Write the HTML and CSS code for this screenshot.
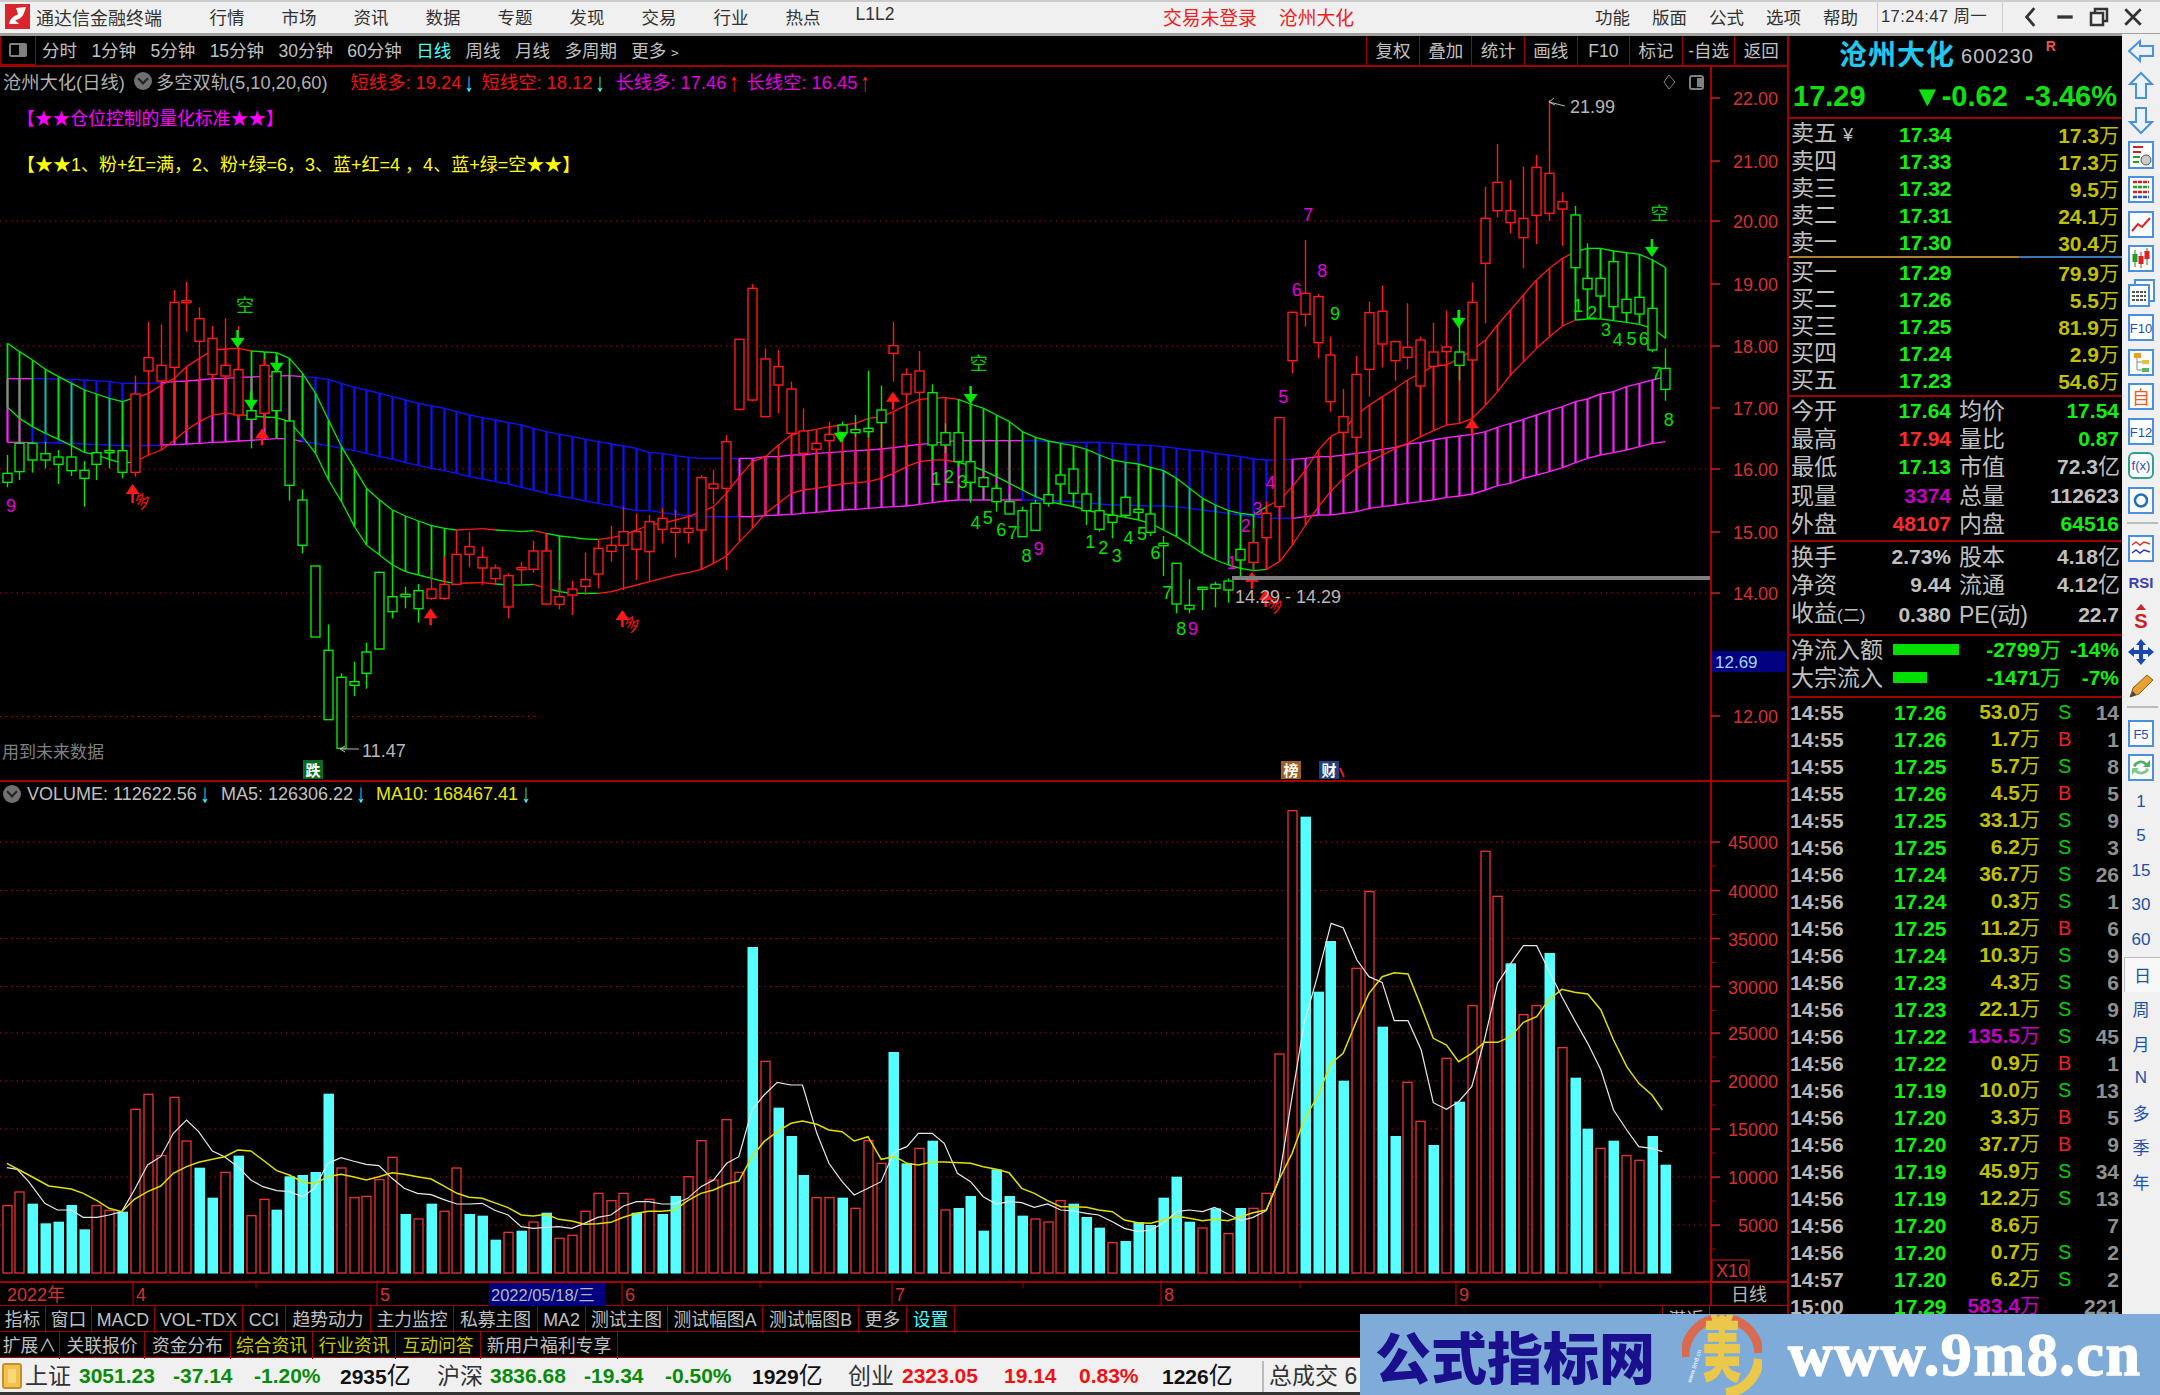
FILE: index.html
```html
<!DOCTYPE html>
<html>
	<head>
		<meta charset="utf-8">
		<title>通达信金融终端</title>
		<link rel="stylesheet" href="styles.css">
	</head>
	<body>
		<div class="menubar">
			<svg class="logo" viewBox="0 0 25 25"><rect width="25" height="25" fill="#d8262c"/><path d="M4 20 C6 12 11 12 13 10 L11 4 L21 3 C19 9 18 15 10 16 L14 20 Z" fill="#fff"/></svg>
			<span class="app-title">通达信金融终端</span>
			<div class="menu-main">
				<span>行情</span><span>市场</span><span>资讯</span><span>数据</span><span>专题</span><span>发现</span><span>交易</span><span>行业</span><span>热点</span><span>L1L2</span>
			</div>
			<div class="menu-notice"><span>交易未登录</span><span>沧州大化</span></div>
			<div class="menu-right"><span>功能</span><span>版面</span><span>公式</span><span>选项</span><span>帮助</span></div>
			<div class="clock">17:24:47 周一</div>
			<div class="win-btns">
				<svg viewBox="0 0 16 20"><path d="M11 2 L4 10 L11 18" fill="none" stroke="#333" stroke-width="2.5"/></svg>
				<svg viewBox="0 0 16 20"><path d="M1 10 H15" stroke="#333" stroke-width="3"/></svg>
				<svg viewBox="0 0 20 20"><path d="M2 6 H14 V18 H2 Z M6 6 V2 H18 V14 H14" fill="none" stroke="#333" stroke-width="2.5"/></svg>
				<svg viewBox="0 0 18 20"><path d="M2 3 L16 17 M16 3 L2 17" stroke="#333" stroke-width="2.5"/></svg>
			</div>
		</div>

		<div class="work">
			<div class="left">
				<div class="toolbar">
					<div class="tb-toggle"><i></i></div>
					<div class="periods">
						<span>分时</span><span>1分钟</span><span>5分钟</span><span>15分钟</span><span>30分钟</span><span>60分钟</span><span class="on">日线</span><span>周线</span><span>月线</span><span>多周期</span><span>更多﹥</span>
					</div>
					<div class="tb-right">
						<span>复权</span><span>叠加</span><span>统计</span><span>画线</span><span>F10</span><span>标记</span><span>-自选</span><span>返回</span>
					</div>
				</div>
				<div class="chart-box">
					<svg id="chart" viewBox="0 67 1788 1239" width="1788" height="1239"></svg>
					<div class="info-line">
						<span class="i-name">沧州大化(日线)</span>
						<span class="dot"></span>
						<span class="i-name">多空双轨(5,10,20,60)</span>
						<span class="red i-gap">短线多: 19.24<em class="cy">↓</em></span>
						<span class="red i-two">短线空: 18.12<em class="cy">↓</em></span>
						<span class="mag">长线多: 17.46<em class="rd">↑</em></span>
						<span class="mag">长线空: 16.45<em class="rd">↑</em></span>
					</div>
					<div class="note note-a">【★★仓位控制的量化标准★★】</div>
					<div class="note note-b">【★★1、粉+红=满，2、粉+绿=6，3、蓝+红=4 ，4、蓝+绿=空★★】</div>
					<div class="vol-line">
						<span class="dot"></span>
						<span class="v-a">VOLUME: 112622.56<em class="cy">↓</em></span>
						<span class="v-c">MA5: 126306.22<em class="cy">↓</em></span>
						<span class="v-b">MA10: 168467.41<em class="cy">↓</em></span>
					</div>
				</div>
				<div class="tabs tabs-a">
					<span>指标</span><span>窗口</span><span>MACD</span><span>VOL-TDX</span><span>CCI</span><span>趋势动力</span><span>主力监控</span><span>私募主图</span><span>MA2</span><span>测试主图</span><span>测试幅图A</span><span>测试幅图B</span><span>更多</span><span class="cyan">设置</span><span class="t-fill"></span><span>潜近</span>
				</div>
				<div class="tabs tabs-b">
					<span>扩展∧</span><span>关联报价</span><span>资金分布</span><span class="olive">综合资讯</span><span class="olive">行业资讯</span><span class="olive">互动问答</span><span>新用户福利专享</span>
				</div>
			</div>

			<div class="quote">
				<div class="q-name"><b>沧州大化</b><span>600230</span><sup>R</sup></div>
				<div class="q-price"><b>17.29</b><b>▼-0.62</b><b>-3.46%</b></div>

				<div class="book book-sell">
					<div><span>卖五<small>¥</small></span><b>17.34</b><em>17.3<u>万</u></em></div>
					<div><span>卖四</span><b>17.33</b><em>17.3<u>万</u></em></div>
					<div><span>卖三</span><b>17.32</b><em>9.5<u>万</u></em></div>
					<div><span>卖二</span><b>17.31</b><em>24.1<u>万</u></em></div>
					<div><span>卖一</span><b>17.30</b><em>30.4<u>万</u></em></div>
				</div>
				<div class="book-split"><i></i></div>
				<div class="book">
					<div><span>买一</span><b>17.29</b><em>79.9<u>万</u></em></div>
					<div><span>买二</span><b>17.26</b><em>5.5<u>万</u></em></div>
					<div><span>买三</span><b>17.25</b><em>81.9<u>万</u></em></div>
					<div><span>买四</span><b>17.24</b><em>2.9<u>万</u></em></div>
					<div><span>买五</span><b>17.23</b><em>54.6<u>万</u></em></div>
				</div>

				<div class="stats stats-a">
					<div><span>今开</span><b class="g">17.64</b><span>均价</span><b class="g">17.54</b></div>
					<div><span>最高</span><b class="r">17.94</b><span>量比</span><b class="g">0.87</b></div>
					<div><span>最低</span><b class="g">17.13</b><span>市值</span><b>72.3<u>亿</u></b></div>
					<div><span>现量</span><b class="p">3374</b><span>总量</span><b>112623</b></div>
					<div><span>外盘</span><b class="r">48107</b><span>内盘</span><b class="g">64516</b></div>
				</div>
				<div class="stats stats-b">
					<div><span>换手</span><b>2.73%</b><span>股本</span><b>4.18<u>亿</u></b></div>
					<div><span>净资</span><b>9.44</b><span>流通</span><b>4.12<u>亿</u></b></div>
					<div><span>收益<small>(二)</small></span><b>0.380</b><span>PE(动)</span><b>22.7</b></div>
				</div>
				<div class="flow">
					<div><span>净流入额</span><i class="bar-a"></i><b>-2799<u>万</u></b><b>-14%</b></div>
					<div><span>大宗流入</span><i class="bar-b"></i><b>-1471<u>万</u></b><b>-7%</b></div>
				</div>
				<div class="ticks">
					<div><span>14:55</span><span>17.26</span><span>53.0<u>万</u></span><span>S</span><span>14</span></div>
					<div><span>14:55</span><span>17.26</span><span>1.7<u>万</u></span><span class="b">B</span><span>1</span></div>
					<div><span>14:55</span><span>17.25</span><span>5.7<u>万</u></span><span>S</span><span>8</span></div>
					<div><span>14:55</span><span>17.26</span><span>4.5<u>万</u></span><span class="b">B</span><span>5</span></div>
					<div><span>14:55</span><span>17.25</span><span>33.1<u>万</u></span><span>S</span><span>9</span></div>
					<div><span>14:56</span><span>17.25</span><span>6.2<u>万</u></span><span>S</span><span>3</span></div>
					<div><span>14:56</span><span>17.24</span><span>36.7<u>万</u></span><span>S</span><span>26</span></div>
					<div><span>14:56</span><span>17.24</span><span>0.3<u>万</u></span><span>S</span><span>1</span></div>
					<div><span>14:56</span><span>17.25</span><span>11.2<u>万</u></span><span class="b">B</span><span>6</span></div>
					<div><span>14:56</span><span>17.24</span><span>10.3<u>万</u></span><span>S</span><span>9</span></div>
					<div><span>14:56</span><span>17.23</span><span>4.3<u>万</u></span><span>S</span><span>6</span></div>
					<div><span>14:56</span><span>17.23</span><span>22.1<u>万</u></span><span>S</span><span>9</span></div>
					<div><span>14:56</span><span>17.22</span><span class="big">135.5<u>万</u></span><span>S</span><span>45</span></div>
					<div><span>14:56</span><span>17.22</span><span>0.9<u>万</u></span><span class="b">B</span><span>1</span></div>
					<div><span>14:56</span><span>17.19</span><span>10.0<u>万</u></span><span>S</span><span>13</span></div>
					<div><span>14:56</span><span>17.20</span><span>3.3<u>万</u></span><span class="b">B</span><span>5</span></div>
					<div><span>14:56</span><span>17.20</span><span>37.7<u>万</u></span><span class="b">B</span><span>9</span></div>
					<div><span>14:56</span><span>17.19</span><span>45.9<u>万</u></span><span>S</span><span>34</span></div>
					<div><span>14:56</span><span>17.19</span><span>12.2<u>万</u></span><span>S</span><span>13</span></div>
					<div><span>14:56</span><span>17.20</span><span>8.6<u>万</u></span><span></span><span>7</span></div>
					<div><span>14:56</span><span>17.20</span><span>0.7<u>万</u></span><span>S</span><span>2</span></div>
					<div><span>14:57</span><span>17.20</span><span>6.2<u>万</u></span><span>S</span><span>2</span></div>
					<div><span>15:00</span><span>17.29</span><span class="big">583.4<u>万</u></span><span></span><span>221</span></div>
				</div>
			</div>

			<div class="sidebar">
				<div class="sb"><svg viewBox="0 0 30 30"><path class="arw" d="M3 15 L14 5 V10 H27 V20 H14 V25 Z"/></svg></div>
				<div class="sb"><svg viewBox="0 0 30 30"><path class="arw" d="M15 2 L26 13 H20 V27 H10 V13 H4 Z"/></svg></div>
				<div class="sb"><svg viewBox="0 0 30 30"><path class="arw" d="M15 28 L26 17 H20 V3 H10 V17 H4 Z"/></svg></div>
				<div class="sb"><svg viewBox="0 0 30 30"><rect class="bx" x="3" y="2" width="24" height="26"/><path d="M7 7 H17 M7 12 H15" stroke="#d02020" stroke-width="2"/><path d="M7 17 H14 M7 22 H13" stroke="#20a020" stroke-width="2"/><circle cx="20" cy="20" r="5" fill="#ccc" stroke="#555"/></svg></div>
				<div class="sb"><svg viewBox="0 0 30 30"><rect class="bx" x="3" y="3" width="24" height="25"/><path d="M7 8 H23 M7 18 H23" stroke="#d02020" stroke-width="2.5" stroke-dasharray="4 1"/><path d="M7 13 H23" stroke="#20a020" stroke-width="2.5" stroke-dasharray="4 1"/><path d="M7 23 H23" stroke="#2050d0" stroke-width="2.5" stroke-dasharray="4 1"/></svg></div>
				<div class="sb"><svg viewBox="0 0 30 30"><rect class="bx" x="3" y="3" width="24" height="25"/><path d="M6 22 L12 15 L16 18 L24 9" fill="none" stroke="#e02020" stroke-width="2"/></svg></div>
				<div class="sb"><svg viewBox="0 0 30 30"><rect class="bx" x="3" y="3" width="24" height="25"/><path d="M9 7 V24 M21 5 V22" stroke="#208020"/><rect x="6.500" y="11" width="5" height="8" fill="#20a020"/><path d="M15 9 V25" stroke="#d02020"/><rect x="12.500" y="13" width="5" height="8" fill="#e02020"/><rect x="18.500" y="8" width="5" height="8" fill="#e02020"/></svg></div>
				<div class="sb"><svg viewBox="0 0 30 30"><rect class="bx" x="9" y="2" width="19" height="21"/><rect class="bx" x="3" y="7" width="20" height="21"/><path d="M6 14 H20 M6 18 H20 M6 22 H20" stroke="#555" stroke-width="2" stroke-dasharray="3 1"/></svg></div>
				<div class="sb"><svg viewBox="0 0 30 30"><rect class="bx" x="3" y="3" width="24" height="25"/><text class="sb-t" x="15" y="21" text-anchor="middle">F10</text></svg></div>
				<div class="sb"><svg viewBox="0 0 30 30"><rect class="bx" x="3" y="3" width="24" height="25"/><path d="M11 9 V23 H17 M11 15 H17" fill="none" stroke="#888"/><rect x="8" y="6" width="7" height="5" fill="#e8a020"/><rect x="16" y="13" width="7" height="4" fill="#e8c040"/><rect x="16" y="21" width="7" height="4" fill="#60b060"/></svg></div>
				<div class="sb"><svg viewBox="0 0 30 30"><rect class="bx" x="3" y="3" width="24" height="25"/><text class="sb-o" x="15" y="23" text-anchor="middle">自</text></svg></div>
				<div class="sb"><svg viewBox="0 0 30 30"><rect class="bx" x="3" y="3" width="24" height="25"/><text class="sb-t" x="15" y="21" text-anchor="middle">F12</text></svg></div>
				<div class="sb"><svg viewBox="0 0 30 30"><rect class="bx bx-t" x="3" y="3" width="24" height="25" rx="5"/><text class="sb-t" x="15" y="20" text-anchor="middle">f(x)</text></svg></div>
				<div class="sb"><svg viewBox="0 0 30 30"><rect class="bx" x="3" y="3" width="24" height="25"/><circle cx="15" cy="15.500" r="6" fill="none" stroke="#2070c0" stroke-width="2.5"/></svg></div>
				<div class="sb-div sb-div-a"></div>
				<div class="sb"><svg viewBox="0 0 30 30"><rect class="bx" x="3" y="3" width="24" height="25"/><path d="M6 12 L10 9 L14 12 L18 9 L24 11" fill="none" stroke="#e03030" stroke-width="1.500"/><path d="M6 20 L10 17 L14 20 L18 17 L24 19" fill="none" stroke="#3030d0" stroke-width="1.500"/></svg></div>
				<div class="sb sb-rsi">RSI</div>
				<div class="sb"><svg viewBox="0 0 30 30"><path d="M15 2 L20 8 H10 Z" fill="#d02020"/><text class="sb-s" x="15" y="26" text-anchor="middle">S</text></svg></div>
				<div class="sb"><svg viewBox="0 0 30 30"><path d="M15 2 L20 8 H17 V13 H22 V10 L28 15 L22 20 V17 H17 V22 H20 L15 28 L10 22 H13 V17 H8 V20 L2 15 L8 10 V13 H13 V8 H10 Z" fill="#1848b0"/></svg></div>
				<div class="sb"><svg viewBox="0 0 30 30"><path d="M4 26 L7 17 L21 4 L27 9 L13 23 Z" fill="#e8a030" stroke="#806020"/><path d="M4 26 L7 20 L10 24 Z" fill="#444"/></svg></div>
				<div class="sb-div sb-div-b"></div>
				<div class="sb"><svg viewBox="0 0 30 30"><rect class="bx" x="3" y="3" width="24" height="25"/><text class="sb-t" x="15" y="21" text-anchor="middle">F5</text></svg></div>
				<div class="sb"><svg viewBox="0 0 30 30"><rect class="bx" x="3" y="3" width="24" height="25"/><path d="M7 14 A8 7 0 0 1 21 11 L24 8 V15 H17 L19 13 A5 4 0 0 0 10 15 Z" fill="#50b060"/><path d="M23 17 A8 7 0 0 1 9 20 L6 23 V16 H13 L11 18 A5 4 0 0 0 20 16 Z" fill="#80c890"/></svg></div>
				<div class="sb">1</div><div class="sb">5</div><div class="sb">15</div><div class="sb">30</div><div class="sb">60</div>
				<div class="sb sb-on">日</div><div class="sb">周</div><div class="sb">月</div><div class="sb">N</div><div class="sb">多</div><div class="sb">季</div><div class="sb">年</div>
			</div>
		</div>

		<div class="status">
			<span class="s-icon"></span>
			<span class="s-l">上证</span><span class="s-g">3051.23</span><span class="s-g">-37.14</span><span class="s-g">-1.20%</span><span class="s-k">2935<u>亿</u></span>
			<span class="s-l">沪深</span><span class="s-g">3836.68</span><span class="s-g">-19.34</span><span class="s-g">-0.50%</span><span class="s-k">1929<u>亿</u></span>
			<span class="s-l">创业</span><span class="s-r">2323.05</span><span class="s-r">19.14</span><span class="s-r">0.83%</span><span class="s-k">1226<u>亿</u></span>
			<span class="s-l s-sep">总成交 6</span>
		</div>

		<div class="mark">
			<span class="mark-cn">公式指标网</span>
			<svg class="mark-logo" viewBox="0 0 80 80">
				<path d="M3 42 A37 37 0 0 1 77 38" fill="none" stroke="#d86a50" stroke-width="9"/>
				<path d="M77 44 A37 37 0 0 1 44 78" fill="none" stroke="#ecc84a" stroke-width="10"/>
				<circle cx="40" cy="5" r="5" fill="#ecc84a"/>
				<text class="mark-mei" transform="translate(40 60) scale(.72 1.35)" text-anchor="middle">美</text>
				<text class="mark-small" transform="translate(9 68) rotate(-72)">www.9m8.cn</text>
			</svg>
			<span class="mark-url">www.9m8.cn</span>
		</div>

		<script src="chart.js"></script>
	</body>
</html>
```

FILE: styles.css
```css
* {margin:0; padding:0; box-sizing:border-box;}
html,body{
	width:2160px;
	height:1395px;
	overflow:hidden;
	background:#000;
	font-family:"Liberation Sans","Noto Sans CJK SC",sans-serif;
	color:#c0c0c0;
}
em,i{font-style:normal;}
u{text-decoration:none; font-weight:normal;}

/* top menu */
.menubar{
	height:36px;
	background:#f0f0f0;
	border-top:2px solid #ccc;
	border-bottom:3px solid #a0a0a0;
	padding-bottom:2px;
	display:flex;
	align-items:center;
	font-size:17.5px;
	color:#333;
}
.logo{width:25px; height:25px; margin-left:5px;}
.app-title{margin-left:6px; font-size:18px; width:155px;}
.menu-main{display:flex;}
.menu-main span{width:72px; text-align:center;}
.menu-notice{display:flex; gap:22px; color:#f02020; margin-left:252px; font-size:18.8px;}
.menu-right{display:flex; gap:21px; margin-left:auto;}
.menu-right span{width:36px;}
.clock{
	margin-left:18px;
	width:126px;
	height:31px;
	line-height:31px;
	padding-left:3px;
	font-size:16.5px;
	border-left:1px solid #ccc;
	border-right:1px solid #ccc;
	letter-spacing:.4px;
}
.win-btns{display:flex; align-items:center; gap:14px; width:157px; padding-left:18px;}
.win-btns svg{width:20px; height:22px;}

/* main layout */
.work{display:flex; height:1322px;}
.left{width:1787px; flex:none;}
.toolbar{
	height:31px;
	display:flex;
	border-bottom:2px solid #a00000;
	font-size:17.5px;
	line-height:30px;
}
.tb-toggle{width:36px; border:1px solid #a00000; border-top:0; display:flex; align-items:center; justify-content:center;}
.tb-toggle i{width:18px; height:14px; border:2px solid #808080; border-radius:2px; border-right-width:8px;}
.periods{display:flex; gap:14.4px; margin-left:6px;}
.periods .on{color:#40ffff;}
.tb-right{display:flex; margin-left:auto; }
.tb-right span{width:52.6px; text-align:center; border-left:1px solid #a00000;}

.chart-box{position:relative; height:1239px; width:1788px;}
#chart{display:block;}
#chart text{font-family:"Liberation Sans","Noto Sans CJK SC",sans-serif; font-size:18px;}
#chart .t-gray{fill:#b8b8b8;}
#chart .t-dim{fill:#808080; font-size:17px;}
#chart .t-axis{fill:#d83030;}
#chart .t-green{fill:#00e000; font-size:18px;}
#chart .t-mag{fill:#e000e0; font-size:18px;}
#chart .t-kong{fill:#00d000; font-size:18px;}
#chart .t-duo{fill:#ff1010; font-size:16px;}
#chart .t-white{fill:#fff; font-size:15px; font-weight:bold;}
#chart .t-blue{fill:#a0d8ff; font-size:17px;}

.info-line{
	position:absolute;
	left:3px;
	top:0;
	height:28px;
	display:flex;
	align-items:center;
	font-size:18.3px;
	white-space:nowrap;
}
.info-line .i-gap{margin-left:23px;}
.info-line .red{color:#f01010; width:131px;}
.info-line .i-two{width:134px;}
.info-line .mag{color:#e000e0; width:131px;}
.info-line .i-name{color:#b0b0b0;}
.info-line em,.vol-line em{
	display:inline-block;
	font-size:20px;
	font-weight:bold;
	line-height:18px;
	margin-left:3px;
	transform:scale(.9,1.3);
}
.cy{color:#40ffff;}
.rd{color:#ff2020;}
.dot{
	width:18px;
	height:18px;
	border-radius:50%;
	background:#707070;
	margin:0 4px 0 9px;
	position:relative;
	flex:none;
}
.dot::after{
	content:"";
	position:absolute;
	left:5px;
	top:3px;
	width:6px;
	height:6px;
	border-right:2px solid #222;
	border-bottom:2px solid #222;
	transform:rotate(45deg);
}
.note{position:absolute; white-space:nowrap;}
.note-a{left:17px; top:37px; color:#ff00ff; font-size:17.8px;}
.note-b{left:17px; top:83px; color:#ffff00; font-size:18px;}
.vol-line{
	position:absolute;
	left:-6px;
	top:715px;
	height:24px;
	display:flex;
	align-items:center;
	font-size:18px;
	white-space:nowrap;
}
.vol-line .dot{margin-right:6px;}
.vol-line .v-a{color:#c0c0c0; width:194px;}
.vol-line .v-c{color:#c0c0c0; width:155px;}
.vol-line .v-b{color:#e8e800;}

/* tabs under the chart */
.tabs{
	display:grid;
	height:26px;
	font-size:17.8px;
	line-height:25px;
	padding-top:1px;
	border-bottom:1px solid #a00000;
	text-align:center;
}
.tabs span{border-right:1px solid #a00000; margin-top:-1px; padding-top:2px;}
.tabs-a{grid-template-columns:46px 46px 63px 88px 43px 85px 83px 84px 48px 82px 95px 96px 48px 48px 708px 47px;}
.tabs-b{grid-template-columns:60px 85px 86px 82px 83px 85px 137px;}
.cyan{color:#40ffff;}
.olive{color:#c8c800;}

/* right quote panel */
.quote{width:335px; flex:none; border-left:2px solid #a00000; background:#000;}
.q-name{height:40px; display:flex; align-items:center; padding:0 0 6px 50px;}
.q-name b{color:#20c8f0; font-size:28px; letter-spacing:1px;}
.q-name span{font-size:20px; margin:6px 0 0 6px; letter-spacing:1px;}
.q-name sup{color:#f05050; font-size:14px; font-weight:bold; margin:-14px 0 0 12px;}
.q-price{
	height:43px;
	display:grid;
	grid-template-columns:120px 89px 115px;
	align-items:center;
	padding-left:4px;
	border-bottom:2px solid #a00000;
	color:#10e010;
	font-size:29px;
	white-space:nowrap;
}
.q-price b:last-child{text-align:right;}
.book{padding-left:2px;}
.book-sell{padding-top:1px;}
.book div{
	height:27px;
	display:grid;
	grid-template-columns:108px 110px 1fr;
	align-items:center;
	padding-right:3px;
}
.book span{font-size:23px; line-height:27px; color:#c0c0c0;}
.book small{font-size:18px; margin-left:6px;}
.book b{color:#10f010; font-size:21px;}
.book em{color:#c0c000; font-size:21px; font-weight:bold; text-align:right;}
.book u{font-size:20px;}
.book-split{height:2px; margin-top:1px; background:#3a78b8;}
.book-split i{display:block; width:230px; height:2px; background:#b08030;}

.stats{border-top:2px solid #a00000; padding:0 3px 0 2px;}
.stats-a{padding-bottom:2px; margin-top:2px;}
.stats-b{padding-top:1px; padding-bottom:6px;}
.stats div{
	height:28.2px;
	display:grid;
	grid-template-columns:72px 88px 74px 1fr;
	align-items:center;
	font-size:23px;
	line-height:28px;
}
.stats div b{font-size:21px; text-align:right; color:#c0c0c0;}
.stats div b u{font-size:22px; letter-spacing:-1px;}
.stats div b.g{color:#10f010;}
.stats div b.r{color:#ff2a2a;}
.stats div b.p{color:#c000c0;}
.stats div span:nth-child(3){padding-left:8px;}
.stats div span{white-space:nowrap;}
.stats small{font-size:17px;}

.flow{border-top:2px solid #a00000; padding:0 3px 4px 2px;}
.flow div{
	height:28px;
	display:grid;
	grid-template-columns:102px 70px 98px 1fr;
	align-items:center;
	font-size:23px;
	line-height:28px;
	white-space:nowrap;
}
.flow b{color:#10f010; font-size:21px; text-align:right;}
.flow u{font-size:21px;}
.flow i{display:block; height:11px; background:#00e000;}
.flow i.bar-a{width:66px;}
.flow i.bar-b{width:34px;}

.ticks{border-top:2px solid #a00000; padding-top:.5px; padding-left:1px; font-size:21px; font-weight:bold;}
.ticks div{
	height:27px;
	display:grid;
	grid-template-columns:104px 72px 74px 20px 1fr;
	align-items:center;
	padding-right:3px;
	line-height:27px;
	white-space:nowrap;
}
.ticks span:nth-child(1){color:#b8b8b8;}
.ticks span:nth-child(2){color:#10f010;}
.ticks span:nth-child(3){color:#c0c000; text-align:right; grid-column:3;}
.ticks span:nth-child(3).big{color:#c000c0;}
.ticks span:nth-child(4){color:#00d000; font-weight:normal; font-size:20px; padding-left:18px; width:40px;}
.ticks span:nth-child(4).b{color:#f02020;}
.ticks span:nth-child(5){color:#909090; text-align:right;}
.ticks u{font-size:20px;}

/* right icon strip */
.sidebar{
	width:38px;
	flex:none;
	margin-top:-2px;
	background:#f0f0f0;
	font-size:17px;
	color:#2050a8;
	height:1324px;
}
.sb{height:34.5px; display:flex; align-items:center; justify-content:center;}
.sb svg{width:30px; height:30px;}
.sb-on{background:#f8f8f8; border-top:1px solid #bbb; border-left:1px solid #bbb; margin:0 0 0 2px;}
.sb-rsi{font-size:15px; font-weight:bold; color:#3a40b0;}
.sb-div{border-bottom:2px solid #bbb; margin:0 2px 0 5px;}
.sb-div-a{height:7px; margin-bottom:7px;}
.sb-div-b{height:4px; margin-bottom:8px;}
.arw{fill:#eaf3ff; stroke:#4a90e0; stroke-width:2;}
.bx{fill:#fff; stroke:#4a90e0; stroke-width:2;}
.bx-t{stroke:#30a090;}
.sb-t{font-size:13px; fill:#2050c0; font-family:"Liberation Sans",sans-serif;}
.sb-o{font-size:18px; fill:#e86020;}
.sb-s{font-size:20px; font-weight:bold; fill:#d02020;}

/* bottom index bar */
.status{
	height:37px;
	background:#f0f0f0;
	border-bottom:3px solid #333;
	padding-top:2px;
	display:grid;
	grid-template-columns:25px 54px 94px 81px 86px 97px 53px 94px 81px 87px 96px 54px 102px 75px 83px 100px 300px;
	align-items:center;
	font-size:21px;
	line-height:30px;
	font-weight:bold;
	color:#111;
	white-space:nowrap;
}
.s-icon{width:20px; height:26px; margin-left:2px; background:#f8d878; border:2px solid #c89020; border-radius:3px; box-shadow:inset 0 0 0 4px #f0c050;}
.s-l{font-weight:normal; color:#333; font-size:23px;}
.s-g{color:#0a8a0a;}
.s-r{color:#f01010;}
.s-k u{font-size:24px;}
.s-sep{border-left:2px solid #bbb; padding-left:5px; height:31px; line-height:31px;}

/* site watermark over the corner */
.mark{
	position:absolute;
	left:1360px;
	top:1314px;
	width:800px;
	height:81px;
	background:#7fabd8;
	display:flex;
	align-items:center;
	padding-left:15px;
	overflow:hidden;
}
.mark-cn{font-family:"Noto Sans CJK SC",sans-serif; font-weight:900; color:#1a0f8c; font-size:56px; line-height:81px; width:307px; white-space:nowrap;}
.mark-logo{width:80px; height:80px; flex:none;}
.mark-mei{font-family:"Noto Sans CJK SC",sans-serif; font-weight:900; font-size:54px; fill:#ecc84a;}
.mark-small{font-size:6px; fill:#fff;}
.mark-url{font-family:"Liberation Serif",serif; font-weight:bold; font-size:62px; color:#fff; margin-left:26px; letter-spacing:1.6px; -webkit-text-stroke:1.500px #fff; white-space:nowrap;}
```

FILE: chart.js
```js
// candle data: high, body top, body bottom, low, 1=red 0=green
// read off in 3x y units, i<99 from y=280, i>=99 from y=90
var K=[
[525,580,607,622,0],[425,490,575,600,0],[485,490,540,578,0],[485,521,540,565,0],[510,531,553,612,0],[465,531,572,588,0],[543,571,595,680,0],[485,518,553,600,0],[505,512,518,565,0],[465,512,577,595,0],
[287,342,577,590,1],[125,233,273,345,1],[133,256,303,375,1],[30,67,262,400,1],[5,62,68,155,1],[82,116,184,270,1],[138,175,283,285,1],[115,256,288,330,1],[138,269,405,415,1],[335,392,418,505,0],
[237,256,400,445,1],[230,275,392,475,0],[420,423,616,662,0],[628,660,796,820,0],[858,858,1071,1071,0],[1033,1111,1319,1319,0],[1180,1192,1405,1405,0],[1145,1205,1216,1248,0],[1088,1116,1180,1226,0],[875,877,1107,1107,0],
[820,950,995,1015,0],[920,943,950,985,0],[912,932,986,1028,0],[870,927,955,960,1],[830,913,955,960,1],[750,823,913,915,1],[755,800,823,862,1],[800,832,864,915,1],[853,864,896,915,1],[880,887,981,1015,1],
[845,863,868,912,1],[782,813,868,878,1],[760,813,972,975,1],[900,950,973,988,1],[902,927,945,1005,1],[817,899,919,945,1],[780,805,882,925,1],[737,796,814,845,1],[680,755,796,930,1],[700,755,808,900,1],
[705,725,815,905,1],[685,715,748,790,1],[690,745,757,833,1],[705,745,757,790,1],[585,593,750,870,1],[570,612,625,672,1],[465,485,625,870,1],[178,178,388,392,1],[12,25,360,365,1],[205,237,410,410,1],
[210,260,315,400,1],[305,327,460,520,1],[385,453,520,555,1],[475,490,508,560,1],[425,463,482,500,1],[425,435,458,485,0],[405,449,458,470,0],[272,445,455,473,0],[317,390,428,505,0],[125,197,220,305,1],
[265,283,342,480,1],[213,273,337,490,1],[313,338,495,540,0],[430,458,495,520,0],[410,458,545,560,0],[370,545,607,668,0],[570,593,620,660,0],[610,625,665,695,0],[638,665,702,703,0],[680,692,770,770,0],
[660,670,751,751,0],[592,644,670,680,0],[570,585,612,660,0],[533,567,640,655,0],[622,642,692,735,0],[650,692,748,755,0],[690,706,727,775,0],[648,652,706,715,0],[622,688,697,700,0],[680,702,757,768,0],
[768,790,797,888,0],[850,850,972,1000,0],[898,976,987,1000,0],[920,922,927,990,0],[905,913,925,982,0],[895,903,930,968,0],[790,808,840,890,0],[745,788,847,875,1],[665,700,773,870,1],
[983,983,1250,1280,1],[665,667,812,850,1],[450,610,673,710,1],[612,620,758,805,1],[740,795,935,965,1],[897,980,1027,1050,1],[798,853,1042,1090,1],[635,668,838,920,1],[587,664,762,832,1],[752,755,812,872,1],
[640,772,802,838,1],[740,750,888,900,1],[698,786,829,885,1],[662,771,785,835,1],[660,786,826,872,0],[577,637,810,990,1],[290,385,520,700,1],[162,277,362,382,1],[270,362,398,430,1],[230,385,443,535,1],
[195,232,376,462,1],[30,250,370,393,1],[307,335,357,468,1],[348,375,533,580,0],[460,565,597,597,0],[482,565,618,657,0],[500,515,650,690,0],[532,628,668,678,0],[548,622,672,685,0],[508,655,780,787,0],
[775,835,898,932,0]
];
var shortUp=[190,215,240,268,290,310,330,342,355,365,352,340,315,295,260,235,210,207,205,213,216,218,235,280,340,420,500,565,625,660,690,708,723,737,745,750,748,746,750,752,755,752,760,768,772,777,778,773,765,750,
735,730,720,710,695,680,640,590,545,530,495,465,455,448,440,435,430,415,410,395,375,358,355,353,358,372,385,405,425,455,472,483,490,497,508,525,540,547,552,562,572,595,625,655,675,692,700,705,680,
1230,1190,1140,1080,1040,1020,975,945,920,895,870,850,828,825,805,780,750,705,660,615,570,535,505,485,475,475,483,488,493,510,533];
var shortDn=[382,415,440,460,478,497,517,525,538,550,545,525,510,480,450,425,405,400,403,408,411,413,425,470,520,600,665,740,795,825,855,875,885,895,905,910,909,908,912,915,915,913,925,935,940,940,940,935,925,915,
905,895,885,878,868,850,828,785,745,700,670,640,630,625,618,612,608,605,595,580,560,545,540,540,547,557,572,590,610,630,650,665,672,680,690,700,705,712,720,730,750,770,795,820,840,855,865,872,868,
1415,1365,1305,1250,1205,1165,1135,1115,1095,1075,1060,1040,1022,1005,1000,985,945,905,855,815,775,740,708,690,687,687,692,697,703,715,745];
var longUp=[296,296,296,296,297,299,300,302,305,310,310,310,308,305,303,300,296,295,292,291,289,288,287,290,293,298,310,322,330,340,350,360,370,378,385,395,405,413,420,428,435,445,455,463,470,478,485,492,498,505,
518,520,527,532,535,535,535,535,535,530,530,525,525,520,518,515,512,510,507,503,498,493,490,485,482,482,482,482,482,482,482,485,487,487,487,487,490,492,495,497,500,505,510,513,520,525,530,537,540,
1110,1108,1105,1100,1100,1095,1090,1085,1078,1072,1062,1058,1050,1043,1038,1033,1025,1012,1000,988,975,962,950,935,927,912,905,890,880,870,860];
var longDn=[487,487,488,488,489,490,492,493,495,497,497,497,495,494,492,490,487,486,483,481,478,476,476,485,490,497,505,512,520,530,537,548,556,565,572,580,590,597,605,612,622,630,640,648,655,663,670,677,685,692,
692,698,703,708,710,710,710,710,710,707,705,703,700,697,693,690,688,685,682,680,678,673,668,663,660,660,660,660,660,660,660,662,663,665,668,672,675,675,677,678,678,680,685,690,695,700,705,710,715,
1285,1285,1280,1275,1275,1270,1265,1255,1250,1245,1240,1235,1230,1222,1218,1212,1200,1187,1180,1165,1155,1145,1133,1118,1105,1095,1088,1080,1070,1060,1055];
// volume bar tops, 1=red hollow 0=cyan solid
var V=[[1277,1],[1236,1],[1271,0],[1330,0],[1325,0],[1275,0],[1348,0],[1277,1],[1291,1],[1295,0],[988,1],[943,1],[1127,1],[952,1],[1083,1],[1163,0],[1253,0],[1177,1],[1127,0],[1307,1],[1258,1],[1289,0],[1189,0],[1185,0],[1176,0],[941,0],[1164,1],[1253,1],[1249,1],[1199,1],[1132,1],[1302,0],[1317,1],[1271,0],[1294,1],[1164,1],[1302,0],[1307,0],[1379,0],[1357,1],[1352,0],[1326,1],[1298,0],[1375,1],[1366,1],[1294,1],[1240,1],[1262,1],[1240,1],[1298,0],[1258,1],[1302,0],[1248,0],[1190,1],[1082,1],[1200,1],[1019,1],[1177,1],[501,0],[844,1],[983,0],[1068,0],[1185,0],[1253,1],[1253,1],[1253,0],[1285,1],[1082,1],[1150,1],[816,0],
[1150,0],[1105,1],[1082,0],[1290,1],[1284,0],[1248,0],[1352,0],[1168,0],[1248,0],[1307,0],[1317,1],[1326,1],[1262,1],[1271,0],[1311,0],[1343,0],[1388,1],[1383,0],[1326,0],[1335,0],[1253,0],[1190,0],[1325,0],[1344,1],[1285,0],[1361,1],[1284,0],[1285,1],[1240,1],[822,1],[92,1],[110,0],[635,0],[483,0],[902,0],[565,1],[335,1],[740,0],[1068,0],[907,1],[1024,1],[1095,0],[835,1],[965,0],[677,1],[214,1],[349,1],[550,0],[704,1],[677,1],[519,0],[803,1],[893,0],[1046,0],[1105,1],[1082,0],[1127,1],[1141,1],[1068,0],[1154,0]];
var ma5a=[12,1163,30,1168,50,1205,78,1270,100,1290,124,1290,145,1312,169,1312,190,1305,212,1295,234,1230,257,1155,280,1130,302,1060,325,1020,346,1055,370,1113,391,1130,414,1160,437,1200,458,1220,482,1232,504,1235,527,1250,548,1225,571,1150,594,1133,615,1143,638,1153,660,1157,683,1195,704,1225,727,1240,751,1244,772,1258,796,1272,817,1272,840,1270,861,1290,885,1305,908,1340,929,1345,952,1342,973,1340,996,1345,1018,1330,1041,1312,1064,1305,1086,1278,1109,1265,1130,1265,1153,1272,1175,1272,1198,1255,1221,1220,1243,1200,1266,1150,1287,1130,1310,990,1331,945,1354,907,1378,915,1398,915,1423,1060,1444,1150,1467,1205,1488,1245,1512,1225,1535,1205,1556,1120,1568,1108];
var ma5b=[12,1100,32,1060,56,1060,77,1090,100,1180,123,1205,145,1250,168,1272,190,1265,212,1268,234,1282,257,1272,280,1290,302,1293,325,1300,346,1305,370,1325,391,1345,414,1355,437,1350,458,1330,482,1295,504,1290,527,1295,548,1282,571,1302,594,1322,615,1312,638,1292,660,1200,683,950,704,730,727,590,751,430,772,443,796,540,817,590,840,607,861,722,885,722,908,810,929,968,952,988,973,965,996,920,1018,780,1041,610,1064,550,1086,497,1109,497,1130,570,1153,650,1175,720,1198,790,1221,870,1243,990,1266,1050,1287,1100,1310,1105,1328,1115];
var ma10a=[12,1150,50,1185,85,1218,124,1227,145,1240,169,1262,190,1285,212,1295,234,1258,257,1235,280,1218,302,1180,325,1160,346,1147,370,1138,391,1130,414,1110,437,1113,458,1140,482,1172,504,1185,527,1205,548,1212,571,1190,594,1183,615,1190,638,1200,660,1190,683,1178,704,1183,727,1190,751,1197,772,1217,796,1240,817,1252,840,1255,861,1268,885,1283,908,1305,929,1308,952,1303,973,1318,996,1323,1018,1333,1041,1331,1064,1327,1086,1312,1109,1300,1130,1294,1153,1294,1175,1290,1198,1262,1221,1240,1243,1230,1266,1212,1287,1203,1310,1130,1331,1085,1354,1055,1378,1030,1398,1023,1423,1033,1444,1050,1467,1055,1488,1083,1512,1070,1535,1138,1556,1130,1568,1138];
var ma10b=[12,1150,32,1155,56,1146,77,1146,123,1150,145,1160,168,1168,190,1178,212,1225,234,1240,257,1262,280,1280,302,1280,325,1282,346,1290,370,1295,391,1320,414,1328,437,1330,458,1320,482,1308,504,1315,527,1322,548,1318,571,1322,594,1310,615,1298,638,1290,660,1200,683,1120,704,1020,727,950,751,850,772,820,796,720,817,640,840,590,861,578,885,582,908,680,929,775,952,795,973,845,996,820,1018,787,1041,787,1064,770,1086,727,1109,710,1130,660,1153,628,1175,637,1198,642,1221,690,1243,780,1266,860,1287,910,1310,945,1328,990];

var RED="#ff1818",GREEN="#00e800",MAG="#ff20ff",BLUE="#1010ff",LINE="#a80000";
var svg=document.getElementById("chart");

function add(tag,attrs,txt){
	var e=document.createElementNS("http://www.w3.org/2000/svg",tag);
	for(var k in attrs){e.setAttribute(k,attrs[k]);}
	if(txt!==undefined){e.textContent=txt;}
	svg.appendChild(e);
	return e;
}
function line(x1,y1,x2,y2,c,w,dash){
	var a={x1:x1,y1:y1,x2:x2,y2:y2,stroke:c,"stroke-width":w||1};
	if(dash){a["stroke-dasharray"]=dash;}
	return add("line",a);
}
function text(x,y,s,cls,anchor){
	return add("text",{x:x,y:y+1,"class":cls,"text-anchor":anchor||"start","dominant-baseline":"central"},s);
}
function cx(i){return Math.round(6.5+12.853*i)+.5;}
function py(i,v){return (i<99?280:90)+v/3;}
function inList(zones,i){
	for(var n=0;n<zones.length;n++){
		if(i>=zones[n][0]&&i<=zones[n][1]){return true;}
	}
	return false;
}
var shortRed=[[10,18],[35,37],[41,41],[46,73],[98,121]];
var longMag=[[0,1],[12,22],[57,78],[100,129]];
var noShortBar=[[35,41],[44,53]];
var noLongBar=[[54,55],[81,83],[129,129]];
function z8(x,y){return [x/2.45,280+y/3];}
function z9(x,y){return [640+x/2.45,280+y/3];}
function z10(x,y){return [1180+x/2.613,90+y/3];}

// grid
[221,346,469,593].forEach(function(y){line(0,y,1711,y,"#c00000",1,"1.5 4");});
line(0,716.5,539,716.5,"#c00000",1,"1.5 4");
[842,890.6,938.6,986.6,1033,1081,1129,1177,1225].forEach(function(y){line(0,y,1711,y,"#c00000",1,"1.5 4");});

// long band, then short band
for(var i=0;i<130;i++){
	var m=inList(longMag,i)?MAG:BLUE;
	if(!inList(noLongBar,i)){
		line(cx(i),py(i,longUp[i]),cx(i),py(i,longDn[i]),m,2.2);
	}
	if(i<129){
		line(cx(i),py(i,longUp[i]),cx(i+1),py(i+1,longUp[i+1]),m,1.4);
		line(cx(i),py(i,longDn[i]),cx(i+1),py(i+1,longDn[i+1]),m,1.4);
	}
}
for(i=0;i<130;i++){
	var c=inList(shortRed,i)?RED:GREEN;
	if(!inList(noShortBar,i)){
		line(cx(i),py(i,shortUp[i]),cx(i),py(i,shortDn[i]),c,1.8);
	}
	if(i<129){
		line(cx(i),py(i,shortUp[i]),cx(i+1),py(i+1,shortUp[i+1]),c,1.3);
		line(cx(i),py(i,shortDn[i]),cx(i+1),py(i+1,shortDn[i+1]),c,1.3);
	}
}

// candles
K.forEach(function(k,i){
	var c=k[4]?RED:GREEN,x=cx(i);
	line(x,py(i,k[0]),x,py(i,k[3]),c,1.4);
	add("rect",{x:x-4.5,y:py(i,k[1]),width:9,height:Math.max(py(i,k[2])-py(i,k[1]),2),fill:"#000",stroke:c,"stroke-width":1.4});
});

// arrows
function arrowDown(p,h){
	var x=p[0],y=p[1];
	line(x,y,x,y+h-8,GREEN,2.5);
	add("polygon",{points:(x-7)+","+(y+h-10)+" "+(x+7)+","+(y+h-10)+" "+x+","+(y+h),fill:GREEN});
}
function arrowUp(p,h){
	var x=p[0],y=p[1];
	line(x,y+8,x,y+h,RED,2.5);
	add("polygon",{points:(x-7)+","+(y+10)+" "+(x+7)+","+(y+10)+" "+x+","+y,fill:RED});
}
arrowDown(z8(582,150),18);
arrowDown(z8(615,335),18);
arrowDown(z8(678,230),16);
arrowDown(z9(492,455),11);
arrowDown(z9(810,318),18);
arrowDown(z10(728,660),18);
arrowDown(z10(1233,447),18);
arrowUp(z8(642,445),17);
arrowUp(z8(1055,985),17);
arrowUp(z9(620,335),18);
arrowUp(z10(763,985),17);
arrowUp(z10(188,1445),17);
arrowUp(z8(325,612),19);
arrowUp(z8(1525,990),17);
arrowUp(z9(1533,930),17);
[[142,500],[632,623],[1275,604]].forEach(function(p){
	text(p[0],p[1],"多","t-duo","middle").setAttribute("transform","rotate(-35 "+p[0]+" "+p[1]+")");
});

// sequence numbers
function nums(fn,list,cls){
	list.forEach(function(n){
		var p=fn(n[1],n[2]);
		text(p[0],p[1],n[0],cls,"middle");
	});
}
nums(z8,[["9",27,675]],"t-mag");
nums(z9,[["1",725,595],["2",757,587],["3",790,603],["4",822,725],["5",852,712],["6",885,747],["7",913,757],["8",947,825],["1",1103,783],["2",1135,800],["3",1168,825],["4",1197,770],["5",1230,760],["6",1263,815],["7",1292,935],["8",1326,1045]],"t-green");
nums(z9,[["9",977,805],["9",1355,1045],["1",1450,845],["2",1484,735],["3",1513,685],["4",1545,605]],"t-mag");
nums(z10,[["5",270,917],["6",305,597],["7",335,372],["8",372,540]],"t-mag");
nums(z10,[["9",405,668],["1",1040,645],["2",1077,665],["3",1113,718],["4",1144,748],["5",1180,745],["6",1212,745],["7",1245,850],["8",1277,988]],"t-green");
[z8(600,75),z9(830,248),z10(1253,368)].forEach(function(p){text(p[0],p[1],"空","t-kong","middle");});

// labels on the candles
line(1232,578,1711,578,"#808080",4);
text(1235,596,"14.29 - 14.29","t-gray");
line(1549,102,1565,106,"#b8b8b8",1);
add("path",{d:"M1554 98 L1549 102 L1555 105",fill:"none",stroke:"#b8b8b8"});
text(1570,106,"21.99","t-gray");
line(340,749,359,749,"#b8b8b8",1);
add("path",{d:"M345 746 L340 749 L345 752",fill:"none",stroke:"#b8b8b8"});
text(362,750,"11.47","t-gray");
text(2,751,"用到未来数据","t-dim");
add("rect",{x:303,y:760,width:20,height:19,fill:"#0a6a20"});
text(313,769,"跌","t-white","middle");
add("rect",{x:1281,y:761,width:20,height:18,fill:"#a06020"});
text(1291,769,"榜","t-white","middle");
add("rect",{x:1319,y:761,width:20,height:18,fill:"#204080"});
text(1329,769,"财","t-white","middle");
line(1340,768,1344,777,"#e02020",2);
add("polygon",{points:"1664,82 1669,75 1675,82 1669,89",fill:"none",stroke:"#808080"});
add("rect",{x:1690,y:76,width:13,height:13,rx:2,fill:"none",stroke:"#808080","stroke-width":2});
add("rect",{x:1697,y:78,width:5,height:9,fill:"#808080"});

// volume
V.forEach(function(v,i){
	var top=780+v[0]/3,x=cx(i);
	if(v[1]){
		add("rect",{x:x-4.5,y:top,width:9,height:1273-top,fill:"#000",stroke:"#f03030","stroke-width":1.3});
	}else{
		add("rect",{x:x-5,y:top,width:10.5,height:1273.5-top,fill:"#55ffff"});
	}
});
function poly(a,b,c,w){
	var pts=[];
	for(var n=0;n<a.length;n+=2){pts.push((a[n]/1.742)+","+(780+a[n+1]/3));}
	for(n=0;n<b.length;n+=2){pts.push((900+b[n]/1.742)+","+(780+b[n+1]/3));}
	add("polyline",{points:pts.join(" "),fill:"none",stroke:c,"stroke-width":w});
}
poly(ma5a,ma5b,"#e8e8e8",1.2);
poly(ma10a,ma10b,"#e0e000",1.5);

// axis and frames
line(1711,67,1711,1282,LINE,2);
line(0,781,1788,781,LINE,2);
line(0,1282,1788,1282,LINE,2);
line(0,1306,1788,1306,LINE,2);
[[98,"22.00"],[161,"21.00"],[221,"20.00"],[284,"19.00"],[346,"18.00"],[408,"17.00"],[469,"16.00"],[532,"15.00"],[593,"14.00"],[716,"12.00"]].forEach(function(a){
	line(1711,a[0],1720,a[0],"#c02020",1.5);
	text(1778,a[0],a[1],"t-axis","end");
});
[[842,"45000"],[890.6,"40000"],[938.6,"35000"],[986.6,"30000"],[1033,"25000"],[1081,"20000"],[1129,"15000"],[1177,"10000"],[1225,"5000"]].forEach(function(a){
	line(1711,a[0],1720,a[0],"#c02020",1.5);
	line(1711,a[0]+24,1716,a[0]+24,"#a00000",1);
	text(1778,a[0],a[1],"t-axis","end");
});
add("rect",{x:1712,y:651,width:74,height:21,fill:"#000080"});
text(1715,661,"12.69","t-blue");
add("rect",{x:1712,y:1260,width:37,height:22,fill:"none",stroke:"#c02020"});
text(1716,1270,"X10","t-axis");

// time axis
text(7,1294,"2022年","t-axis");
[[133,"4"],[377,"5"],[622,"6"],[892,"7"],[1161,"8"],[1456,"9"]].forEach(function(a){
	line(a[0],1282,a[0],1306,LINE,1.2);
	text(a[0]+3,1294,a[1],"t-axis");
});
[256,510,760,1023,1300,1600].forEach(function(x){line(x,1282,x,1288,LINE,1);});
add("rect",{x:489,y:1283,width:116,height:23,fill:"#000080"});
text(491,1294,"2022/05/18/三","t-gray").setAttribute("style","font-size:16.5px");
line(1711,1282,1711,1306,LINE,2);
text(1749,1294,"日线","t-gray","middle");
```
